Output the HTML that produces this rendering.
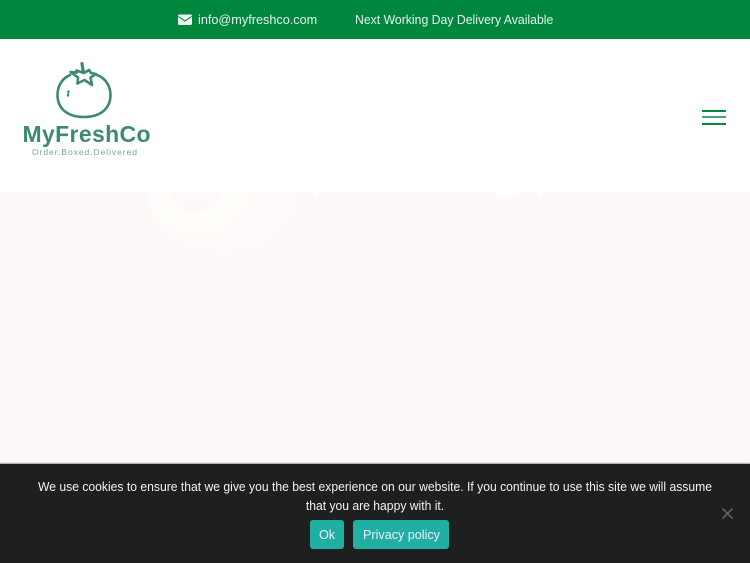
<!DOCTYPE html>
<html><head><meta charset="utf-8">
<style>
*{box-sizing:border-box}
html,body{margin:0;padding:0}
body{width:750px;height:563px;overflow:hidden;position:relative;background:#fff;font-family:"Liberation Sans",sans-serif}
.abs{position:absolute;white-space:nowrap}
#top{left:0;top:0;width:750px;height:39px;background:#00873e}
#hero{left:0;top:192px;width:750px;height:272px;background:#fef9f8}
#ck{left:0;top:464px;width:750px;height:99px;background:#1e1f1f;box-shadow:0 -1px 1px rgba(0,0,0,.35)}
.t{color:#e4f3ea;font-size:13px;line-height:16px;top:12px;transform-origin:0 50%}
.c{color:#f2f2f2;font-size:12.6px;line-height:16px;width:750px;left:0;text-align:center;transform:scaleX(.964);transform-origin:375px 50%}
.b{background:#1fb0a3;color:#eef;border-radius:3px;font-size:12.6px;text-align:center;top:520px;height:29px;line-height:30px}
.bar{left:702px;width:24px;height:2px;background:#008a40}
</style></head><body>
<div class="abs" id="top"></div>
<svg class="abs" style="left:178px;top:14px" width="14" height="12" viewBox="0 0 14 12"><rect x="0" y="0.5" width="14" height="10.5" rx="1.5" fill="#f1f8f4"/><path d="M0.3 2.4L7 7L13.7 2.4" stroke="#00873e" stroke-width="1.1" fill="none"/></svg>
<div class="abs t" style="left:198px;transform:scaleX(.975)">info@myfreshco.com</div>
<div class="abs t" style="left:355px;transform:scaleX(.942)">Next Working Day Delivery Available</div>

<svg class="abs" style="left:0;top:40px;filter:blur(.3px)" width="170" height="130" viewBox="0 40 170 130">
<path d="M70 75C61 79 57.500 87 57.500 95C57.500 109 68 117 84 117C101 117 110.500 108 110.500 95C110.500 87 106 78 97 75" fill="none" stroke="#3d8a6c" stroke-width="2.6" stroke-linecap="round"/>
<path d="M82 63.500C82.500 67 83 70 83.500 73" fill="none" stroke="#3d8a6c" stroke-width="3.200" stroke-linecap="round"/>
<path d="M84 73L89 70L91 73L96 74L90.500 77.500L92 85L84.500 80L77.500 83.500L78 77.500L70.500 72L77 72.500L76.500 70.500Z" fill="#fff" stroke="#3d8a6c" stroke-width="2.600" stroke-linejoin="round"/>
<path d="M68.500 91.500V92M68 94.500V95.500" stroke="#3d8a6c" stroke-width="2.400" stroke-linecap="round"/>
<text x="22.500" y="142" font-family="Liberation Sans" font-weight="700" font-size="23" fill="#3d8a6c" textLength="128" lengthAdjust="spacing">MyFreshCo</text>
<text x="32" y="155" font-family="Liberation Sans" font-size="8.500" fill="#74a992" textLength="105" lengthAdjust="spacing">Order.Boxed.Delivered</text>
</svg>

<div class="abs bar" style="top:110px"></div>
<div class="abs bar" style="top:116px;opacity:.75"></div>
<div class="abs bar" style="top:123px"></div>

<div class="abs" id="hero"></div>
<svg class="abs" style="left:120px;top:192px;filter:blur(1px)" width="450" height="72" viewBox="0 0 450 72">
<ellipse cx="102" cy="-2" rx="75" ry="60" fill="#fdfaf9"/>
<ellipse cx="78" cy="-2" rx="51" ry="45" fill="#fefdf9"/>
<ellipse cx="75" cy="-4" rx="26" ry="24" fill="#fdf9f8"/>
<ellipse cx="197" cy="0" rx="3.500" ry="4.500" fill="#fff"/>
<ellipse cx="388" cy="0" rx="13" ry="5" fill="#fff"/>
<ellipse cx="419" cy="0" rx="3.500" ry="4.500" fill="#fff"/>
</svg>

<div class="abs" id="ck"></div>
<div class="abs c" style="top:479px">We use cookies to ensure that we give you the best experience on our website. If you continue to use this site we will assume</div>
<div class="abs c" style="top:498px">that you are happy with it.</div>
<div class="abs b" style="left:310px;width:34px">Ok</div>
<div class="abs b" style="left:353px;width:96px;padding-left:1px">Privacy policy</div>
<svg class="abs" style="left:721px;top:507px" width="13" height="13" viewBox="0 0 13 13"><path d="M1.500 1.500L11.500 11.500M11.500 1.500L1.500 11.500" stroke="#5f5f5f" stroke-width="1.7"/></svg>
</body></html>
